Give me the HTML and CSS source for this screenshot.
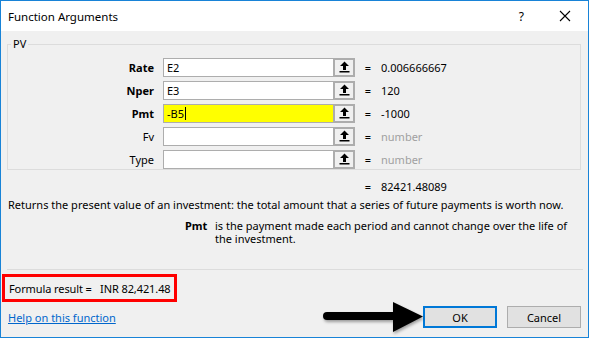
FILE: index.html
```html
<!DOCTYPE html>
<html lang="en">
<head>
  <meta charset="UTF-8">
  <title>Function Arguments</title>
  <link rel="stylesheet" href="styles.css">
</head>
<body>

<div class="dialog">
  <div class="dialog-title">
    <span class="title-text">Function Arguments</span>
    <span class="title-help">?</span>
    <svg class="title-close" width="12" height="12" viewBox="0 0 12 12"><path d="M1 1L11 11M11 1L1 11" stroke="#000" stroke-width="1.1" fill="none"/></svg>
  </div>

  <div class="dialog-body">
    <fieldset class="args-group">
      <legend>PV</legend>

      <div class="arg-row">
        <label class="arg-label bold">Rate</label>
        <div class="arg-input">E2</div>
        <div class="ref-btn"><svg width="11" height="12" viewBox="0 0 11 12"><path d="M5.5 0.5L1 5H4V9H7V5H10Z" fill="#000"/><rect x="0.5" y="10" width="10" height="1.5" fill="#000"/></svg></div>
        <span class="eq">=</span>
        <span class="arg-value">0.006666667</span>
      </div>

      <div class="arg-row">
        <label class="arg-label bold">Nper</label>
        <div class="arg-input">E3</div>
        <div class="ref-btn"><svg width="11" height="12" viewBox="0 0 11 12"><path d="M5.5 0.5L1 5H4V9H7V5H10Z" fill="#000"/><rect x="0.5" y="10" width="10" height="1.5" fill="#000"/></svg></div>
        <span class="eq">=</span>
        <span class="arg-value">120</span>
      </div>

      <div class="arg-row">
        <label class="arg-label bold">Pmt</label>
        <div class="arg-input active">-B5<span class="caret"></span></div>
        <div class="ref-btn"><svg width="11" height="12" viewBox="0 0 11 12"><path d="M5.5 0.5L1 5H4V9H7V5H10Z" fill="#000"/><rect x="0.5" y="10" width="10" height="1.5" fill="#000"/></svg></div>
        <span class="eq">=</span>
        <span class="arg-value">-1000</span>
      </div>

      <div class="arg-row">
        <label class="arg-label">Fv</label>
        <div class="arg-input"></div>
        <div class="ref-btn"><svg width="11" height="12" viewBox="0 0 11 12"><path d="M5.5 0.5L1 5H4V9H7V5H10Z" fill="#000"/><rect x="0.5" y="10" width="10" height="1.5" fill="#000"/></svg></div>
        <span class="eq">=</span>
        <span class="arg-value muted">number</span>
      </div>

      <div class="arg-row">
        <label class="arg-label">Type</label>
        <div class="arg-input"></div>
        <div class="ref-btn"><svg width="11" height="12" viewBox="0 0 11 12"><path d="M5.5 0.5L1 5H4V9H7V5H10Z" fill="#000"/><rect x="0.5" y="10" width="10" height="1.5" fill="#000"/></svg></div>
        <span class="eq">=</span>
        <span class="arg-value muted">number</span>
      </div>
    </fieldset>

    <div class="result-row">
      <span class="eq">=</span>
      <span class="arg-value">82421.48089</span>
    </div>

    <div class="func-desc">Returns the present value of an investment: the total amount that a series of future payments is worth now.</div>

    <div class="arg-help">
      <span class="arg-help-name">Pmt</span>
      <span class="arg-help-text">is the payment made each period and cannot change over the life of the investment.</span>
    </div>

    <div class="separator"></div>

    <div class="formula-result">Formula result =&nbsp;&nbsp;&nbsp;INR 82,421.48</div>

    <div class="dialog-footer">
      <a class="help-link" href="#">Help on this function</a>
      <div class="footer-buttons">
        <button class="btn btn-default">OK</button>
        <button class="btn">Cancel</button>
      </div>
    </div>
  </div>

  <svg class="pointer-arrow" width="112" height="40" viewBox="0 0 112 40">
    <defs>
      <filter id="shadow" x="-10%" y="-20%" width="130%" height="150%">
        <feDropShadow dx="1" dy="2" stdDeviation="1.5" flood-color="#000" flood-opacity="0.35"/>
      </filter>
    </defs>
    <g filter="url(#shadow)">
      <path d="M6 15H76" stroke="#000" stroke-width="8" stroke-linecap="round"/>
      <path d="M72 1L102 15.5L72 31Z" fill="#000"/>
    </g>
  </svg>
</div>

</body>
</html>
```

FILE: styles.css
```css
* {
  box-sizing: border-box;
}

body {
  margin: 0;
  font-family: "Noto Sans", "Open Sans", sans-serif;
  font-size: 11px;
  color: #000;
  background: #f0f0f0;
}

.dialog {
  position: relative;
  width: 589px;
  height: 338px;
  border: 1px solid #1883d7;
  background: #f0f0f0;
  white-space: nowrap;
}

.dialog-title {
  height: 30px;
  background: #fff;
  display: flex;
  align-items: center;
  padding-left: 7px;
}

.title-text {
  font-size: 11.5px;
  flex: 1;
}

.title-help {
  font-size: 12px;
  margin-right: 35px;
}

.title-close {
  margin-right: 17px;
}

.dialog-body {
  padding: 0 6px 0 6px;
}

.args-group {
  margin: 6px 0 0 0;
  padding: 0 0 5px 0;
  border: 1px solid #dcdcdc;
  width: 574px;
  height: 133px;
}

.args-group legend {
  margin-left: 3px;
  padding: 0 2px;
  line-height: 14px;
}

.arg-row {
  display: flex;
  align-items: center;
  height: 18px;
  margin-top: 5px;
}

.arg-row:first-of-type {
  margin-top: 7px;
}

.arg-label {
  width: 146px;
  text-align: right;
  margin-right: 9px;
}

.bold {
  font-weight: bold;
}

.arg-input {
  width: 170px;
  height: 19px;
  border: 1px solid #adadad;
  border-right: none;
  background: #fff;
  padding-left: 3px;
  line-height: 17px;
  display: flex;
  align-items: center;
}

.arg-input.active {
  background: #ffff00;
}

.caret {
  display: inline-block;
  width: 1px;
  height: 13px;
  background: #000;
  margin-left: 1px;
}

.ref-btn {
  width: 22px;
  height: 19px;
  border: 2px solid #adadad;
  background: #f0f0f0;
  display: flex;
  align-items: center;
  justify-content: center;
}

.eq {
  width: 26px;
  text-align: center;
}

.muted {
  color: #a0a0a0;
}

.result-row {
  display: flex;
  padding-left: 348px;
  margin-top: 8px;
  height: 16px;
  align-items: center;
}

.func-desc {
  margin-top: 3px;
  padding-left: 1px;
  line-height: 15px;
}

.arg-help {
  display: flex;
  margin-top: 7px;
  padding-left: 178px;
  line-height: 13px;
}

.arg-help-name {
  font-weight: bold;
  width: 30px;
  flex-shrink: 0;
}

.arg-help-text {
  width: 362px;
  white-space: normal;
}

.separator {
  height: 1px;
  background: #dcdcdc;
  margin-top: 24px;
  width: 576px;
}

.formula-result {
  margin: 4px 0 0 -5px;
  width: 175px;
  height: 28px;
  border: 3px solid #ff0000;
  padding-left: 4px;
  display: flex;
  align-items: center;
  letter-spacing: -0.1px;
}

.dialog-footer {
  display: flex;
  justify-content: space-between;
  align-items: center;
  margin-top: 4px;
}

.help-link {
  color: #0066cc;
  text-decoration: underline;
  margin-left: 1px;
}

.footer-buttons {
  display: flex;
  gap: 10px;
  margin-right: 1px;
}

.btn {
  width: 74px;
  height: 22px;
  font-family: inherit;
  font-size: 11px;
  background: #e1e1e1;
  border: 1px solid #adadad;
  padding: 0;
}

.btn-default {
  border: 2px solid #0078d7;
}

.pointer-arrow {
  position: absolute;
  left: 320px;
  top: 300px;
}
```
